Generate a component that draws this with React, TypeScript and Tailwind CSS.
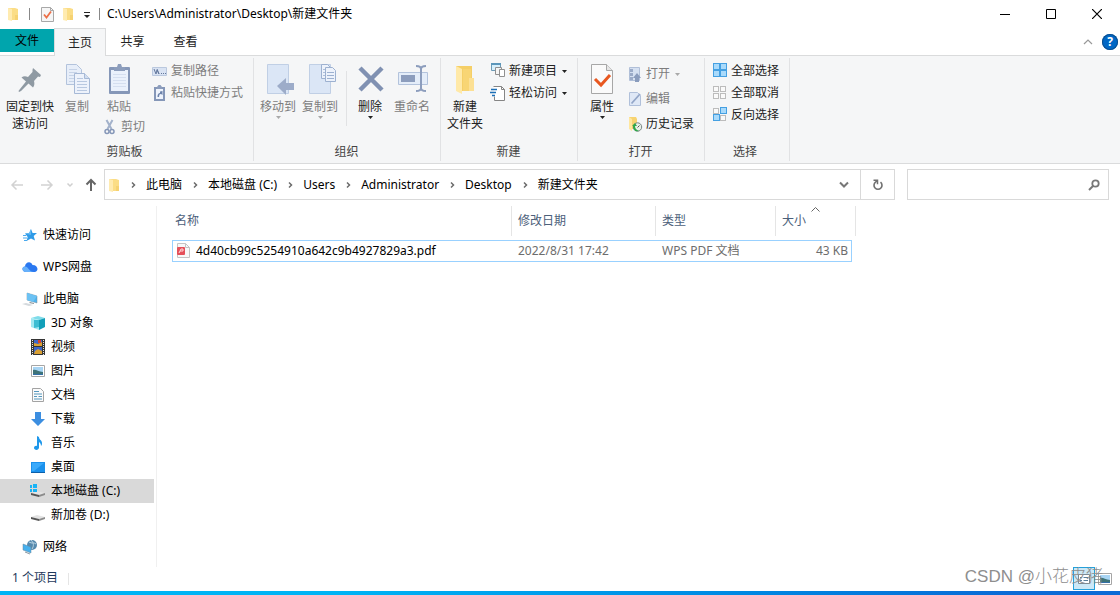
import React from 'react';

type IconProps = { className?: string };

const Svg: React.FC<{ w: number; h: number; className?: string; children: React.ReactNode }> = ({ w, h, className, children }) => (
  <svg width={w} height={h} viewBox={`0 0 ${w} ${h}`} fill="none" aria-hidden="true" className={`shrink-0 ${className ?? ''}`}>
    {children}
  </svg>
);

/* Small shared glyphs */

const FolderIcon: React.FC<IconProps> = ({ className }) => (
  <Svg w={12} h={14} className={className}>
    <path d="M1 1h7l3 1v11H1z" fill="#fbdd86" />
    <path d="M1 1l4 1v12l-4-1z" fill="#ffebb0" />
    <path d="M8 8h3v5H8z" fill="#f6d272" />
  </Svg>
);

const CheckPageIcon: React.FC = () => (
  <Svg w={13} h={15}>
    <path d="M.5.5h9l3 3v11H.5z" fill="#f6f6f6" stroke="#a8a8a8" />
    <path d="M9.500.500v3h3" stroke="#a8a8a8" />
    <path d="M3 7.500l2.500 3L10 4.500" stroke="#ec7048" strokeWidth="1.800" />
  </Svg>
);

const DropArrow: React.FC<{ muted?: boolean }> = ({ muted }) => (
  <Svg w={5} h={3}>
    <path d="M0 0h5L2.500 3z" fill={muted ? '#a9a9a9' : '#222'} />
  </Svg>
);

const Crumb: React.FC = () => (
  <Svg w={26} h={10}>
    <path d="M12 2.500L14.500 5 12 7.500" stroke="#6b6b6b" strokeWidth="1.500" />
  </Svg>
);

/* Ribbon icons, large */

const PinIcon = () => (
  <Svg w={32} h={32}>
    <path d="M19 4l8 7-1 2-2-.5-4 4.500c.8 3 .3 5-1 6.500l-4.500-4L7 27l-2 1-.500-1L6 25l6-7.500-4.500-4c1.800-1.500 4-1.700 6.500-.500l4.500-5V6z" fill="#8f9aa3" />
  </Svg>
);

const pageLines = (x: number, y: number, w: number, n: number, c: string) =>
  Array.from({ length: n }, (_, i) => <path key={i} d={`M${x} ${y + i * 3}.5h${w}`} stroke={c} />);

const CopyIcon = () => (
  <Svg w={32} h={32}>
    <path d="M5.500.500h10l5 5v15h-15z" fill="#e7eef9" stroke="#b3c3dc" />
    {pageLines(8, 5, 8, 5, '#c6d3e7')}
    <path d="M13.500 9.500h10l5 5v15h-15z" fill="#edf2fb" stroke="#a6b9d6" />
    <path d="M23.500 9.500v5h5" stroke="#a6b9d6" fill="#d2deef" />
    {pageLines(16, 14, 6, 1, '#b8c8e0')}
    {pageLines(16, 17, 10, 4, '#b8c8e0')}
  </Svg>
);

const PasteIcon = () => (
  <Svg w={32} h={32}>
    <rect x="6" y="3" width="21" height="27" rx="1" fill="#8597b8" />
    <rect x="8" y="6" width="17" height="21" fill="#eaf1fc" />
    {pageLines(10, 10, 13, 5, '#d5dff0')}
    <path d="M11 7V3h3l1-3h3l1 3h3v4z" fill="#8c9dbc" />
  </Svg>
);

const MoveToIcon = () => (
  <Svg w={32} h={32}>
    <path d="M5.500.500h21v29h-21z" fill="#dbe6f6" stroke="#c0cfe5" />
    <path d="M15 22l9-8v5h8v7h-8v5z" fill="#9dacc9" />
  </Svg>
);

const CopyToIcon = () => (
  <Svg w={32} h={32}>
    <path d="M5.500.500h21v29h-21z" fill="#dbe6f6" stroke="#c0cfe5" />
    <path d="M17.500.500h6l3 3v11h-9z" fill="#edf2fb" stroke="#9db1d0" />
    <path d="M21.500 3.500h7l3 3v11h-10z" fill="#edf2fb" stroke="#9db1d0" />
    {pageLines(23, 8, 7, 3, '#9db1d0')}
    {pageLines(19, 5, 2, 3, '#aebfda')}
  </Svg>
);

const DeleteIcon = () => (
  <Svg w={32} h={32}>
    <path d="M6 4l22 22M28 4L6 26" stroke="#8091b2" strokeWidth="4.500" />
  </Svg>
);

const RenameIcon = () => (
  <Svg w={32} h={32}>
    <path d="M2.500 8.500h29v12h-29z" fill="#e4edf9" stroke="#b3c3dc" />
    <path d="M5 11h14v7H5z" fill="#8c9dbd" />
    <path d="M20 2c3 0 5 1 5 3v19c0 2-2 3-5 3M30 2c-3 0-5 1-5 3v19c0 2 2 3 5 3" stroke="#8c9dbd" strokeWidth="2" />
  </Svg>
);

const NewFolderIcon = () => (
  <Svg w={32} h={32}>
    <path d="M7 2h16v12l2 1v12H9z" fill="#f5cf67" />
    <path d="M14 5h8v9h-2v13h-6z" fill="#f8d574" />
    <path d="M20 14h5v13h-5z" fill="#fce094" />
    <path d="M7 2l6 3v25l-6-3z" fill="#ffe9a8" />
  </Svg>
);

const PropertiesIcon = () => (
  <Svg w={32} h={32}>
    <path d="M5.500.500h15l6 6v23h-21z" fill="#fafafa" stroke="#a7a7a7" />
    <path d="M20.500.500v6h6" stroke="#a7a7a7" fill="#e6e6e6" />
    <path d="M9 15l6 6 9-10" stroke="#e8571f" strokeWidth="3" />
  </Svg>
);

/* Ribbon icons, small */

const CopyPathIcon = () => (
  <Svg w={16} h={16}>
    <path d="M.500 4.500h14v8h-14z" fill="#d9e3f3" stroke="#bac8de" />
    <path d="M2 6l2 5 1-4 2 4M5 6l2 5M9 10.500h1M11 10.500h1M13 10.500h1" stroke="#64789c" />
  </Svg>
);

const ShortcutIcon = () => (
  <Svg w={16} h={16}>
    <path d="M2 2h11v14H2z" fill="#8597b8" />
    <path d="M4 4h7v10H4z" fill="#eef3fc" />
    <path d="M5 4V2l1.500-2h2L10 2v2z" fill="#8c9dbc" />
    <path d="M5.500 12c0-3 1-4 2.500-4V6.500L10.500 6v4L9 9c-2 0-1.500 1-2 3z" fill="#6d83ab" />
  </Svg>
);

const CutIcon = () => (
  <Svg w={14} h={16}>
    <path d="M2.500 1l5 9M8.500 1l-5 9" stroke="#a3b2cb" strokeWidth="2" />
    <circle cx="3" cy="12.500" r="2" stroke="#8597b8" strokeWidth="1.500" />
    <circle cx="8" cy="12.500" r="2" stroke="#8597b8" strokeWidth="1.500" />
  </Svg>
);

const NewItemIcon = () => (
  <Svg w={16} h={16}>
    <path d="M1.500.500h9v7h-9z" fill="#d7effb" stroke="#6d9bb6" />
    <path d="M1 0h10v2H1z" fill="#5b96ba" />
    <path d="M5.500 4.500h6v7h-6z" fill="#f5f5f5" stroke="#909090" />
    <path d="M9.500 6.500h5v7h-5z" fill="#fff" stroke="#909090" />
  </Svg>
);

const EasyAccessIcon = () => (
  <Svg w={16} h={16}>
    <path d="M3.500 1.500h8l3 3v11h-10v-4" fill="#fff" stroke="#858585" />
    <path d="M11.500 1.500v3h3" stroke="#858585" />
    <path d="M1 4.500h6M0 7.500h6M2 10.500h3" stroke="#1d70b7" strokeWidth="1.500" />
  </Svg>
);

const OpenIcon = () => (
  <Svg w={16} h={16}>
    <path d="M2.500 1.500h10v13h-10z" fill="#d5e0f1" stroke="#b0bfd8" />
    <path d="M3 3h3v3H3zM3 7h3v3H3zM3 11h3v3H3z" fill="#9babc8" />
    <path d="M8 16v-4H6l4-5 4 5h-2v4z" fill="#8a9cbd" />
  </Svg>
);

const EditIcon = () => (
  <Svg w={16} h={16}>
    <path d="M2.500 1.500h8l3 3v10h-11z" fill="#dfe8f6" stroke="#b0c0da" />
    <path d="M4.500 12.500L13 3" stroke="#93a6c8" strokeWidth="1.800" />
  </Svg>
);

const HistoryIcon = () => (
  <Svg w={16} h={16}>
    <path d="M2 1h7l1 2v10H3z" fill="#f7d371" />
    <path d="M2 1l3 2v12l-3-2z" fill="#ffe79f" />
    <circle cx="10.500" cy="11" r="4.200" fill="#e8f0e8" stroke="#7a8583" />
    <path d="M5 10l3-3 2 3H8c0 3 2 4 4 5-4 1-6-1-6-5z" fill="#2fa84a" />
    <path d="M10.500 11.500l2-2" stroke="#555" />
  </Svg>
);

const SelectIcon: React.FC<{ on: boolean[] }> = ({ on }) => (
  <Svg w={16} h={16}>
    {on.map((filled, i) => {
      const x = (i % 2) * 7;
      const y = Math.floor(i / 2) * 7;
      return filled ? (
        <rect key={i} x={x + 1.5} y={y + 0.5} width="6" height="6" fill="#a9dafb" stroke="#45a0e2" />
      ) : (
        <rect key={i} x={x + 1.5} y={y + 1.5} width="5" height="5" fill="#fafafa" stroke="#bcbcbc" />
      );
    })}
  </Svg>
);

/* Navigation pane icons */

const StarIcon = () => (
  <Svg w={16} h={16}>
    <path d="M9 2l1.600 4H15l-3.300 3 1.300 4.500L9 11.500 4.500 14l1.200-4L3 6.500 7.200 6z" fill="#2f9be8" />
    <path d="M9 2v6L3 6.500 7.200 6z" fill="#61b8f3" />
    <path d="M1 8.500h3M1 11h4M2 13.500h3" stroke="#49a9ee" />
  </Svg>
);

const CloudIcon = () => (
  <Svg w={16} h={16}>
    <path d="M4 13C-.500 13-.500 7.500 3 7.500 3 3 9 1.500 10.500 6c6 0 6.500 7 2 7z" fill="#2a78f0" />
    <path d="M4 13C-.500 13-.500 7.500 3 7.500c3-.500 4 5.500 9 5.500z" fill="#67b1fb" />
  </Svg>
);

const PcIcon = () => (
  <Svg w={16} h={16}>
    <path d="M5 2l10 3v7L5 9z" fill="#4fb4ef" stroke="#7a8c99" strokeWidth=".5" />
    <path d="M5 2l10 3-4 6-6-2z" fill="#6cc2f4" />
    <path d="M8 11l4 1v1l-5-1z" fill="#8b959c" />
    <path d="M0 13l4-1 7 2-4 1z" fill="#d4d9dd" />
  </Svg>
);

const CubeIcon = () => (
  <Svg w={16} h={16}>
    <path d="M1 3l7-2 7 2-6 2z" fill="#7fdcea" />
    <path d="M1 3l8 2v10l-8-3z" fill="#9fe8f2" />
    <path d="M9 5l6-2v9l-6 3z" fill="#129fb9" />
    <path d="M4 5l5 0v7l-5 1z" fill="#3bbdd3" />
  </Svg>
);

const VideoIcon = () => (
  <Svg w={16} h={16}>
    <path d="M1 0h14v16H1z" fill="#353535" />
    <path d="M4 1h8v6H4zM4 8h8v7H4z" fill="#3b66c9" />
    <path d="M4 4l4 1 4-2v4H4zM5 12l3-2 4 2v3H4z" fill="#d9a032" />
    <path d="M8 1h3v3H8z" fill="#d4422d" />
    <path d="M2.500 1v15M13.500 1v15" stroke="#e6e6e6" strokeDasharray="1 1" />
  </Svg>
);

const PictureIcon: React.FC = () => (
  <Svg w={16} h={16}>
    <path d="M1.500 2.500h13v11h-13z" fill="#fff" stroke="#a6a6a6" />
    <path d="M3 4h10v8H3z" fill="#a8d5f4" />
    <path d="M3 7c3-1 5 2 10 2v3H3z" fill="#3e7378" />
    <path d="M3 11h10v1H3z" fill="#336fa8" />
  </Svg>
);

const DocIcon = () => (
  <Svg w={16} h={16}>
    <path d="M2.500 1.500h8l3 3v10h-11z" fill="#fbfbfb" stroke="#a3a3a3" />
    <path d="M4 4.500h5M4 7h8M4 9.500h3M8.500 9.500H12M4 12h8" stroke="#5597bd" />
  </Svg>
);

const DownloadIcon = () => (
  <Svg w={16} h={16}>
    <path d="M5 1h6v7h4l-7 7-7-7h4z" fill="#3c8ee0" />
  </Svg>
);

const MusicIcon = () => (
  <Svg w={16} h={16}>
    <path d="M7 1l2 1c0 3 3 3 3 6 0 1 0 2-1 3 0-3-2-4-2-4v6c-1 3-5 2-5 0s2-2.500 3-2z" fill="#1e97ea" />
  </Svg>
);

const DesktopIcon = () => (
  <Svg w={16} h={16}>
    <path d="M1 3h14v11H1z" fill="#1b91ec" />
    <path d="M2 4h12L4 12H2z" fill="#3aaafb" />
    <path d="M1 13h14v1H1z" fill="#0c5fa9" />
  </Svg>
);

const DriveIcon: React.FC<{ system?: boolean }> = ({ system }) => (
  <Svg w={16} h={16}>
    <path d="M1 10l6-2 8 2-6 2z" fill="#e3e3e3" />
    <path d="M1 10l8 2v2l-8-2z" fill="#555" />
    <path d="M9 12l6-2v2l-6 2z" fill="#8c8c8c" />
    {system && <path d="M0 2h2v3H0zM3 1h4v4H3zM0 6h2v3H0zM3 6h4v3H3z" fill="#18b3f5" />}
  </Svg>
);

const NetworkIcon = () => (
  <Svg w={16} h={16}>
    <circle cx="10" cy="6" r="5" fill="#5689ad" />
    <path d="M7 3c3 2 5 0 7 2M9 1c3 3 3 6 1 9" stroke="#b8d5e5" />
    <path d="M1 5l8 3v6l-8-3z" fill="#46b0ee" stroke="#6b8798" strokeWidth=".5" />
    <path d="M3 13l5 2" stroke="#8a99a3" />
  </Svg>
);

const PdfIcon = () => (
  <Svg w={14} h={16}>
    <path d="M1.500.500h8l4 4v10h-12z" fill="#f8f8f8" stroke="#c4c4c4" />
    <path d="M9.500.500v4h4" stroke="#c4c4c4" />
    <rect x="1" y="4" width="8" height="8" rx="1" fill="#e5505a" />
    <path d="M3 10l2-4h2v2H4" stroke="#ffd9d9" />
  </Svg>
);

/* Ribbon pieces */

interface BigButtonProps {
  icon: React.ReactNode;
  lines: string[];
  disabled?: boolean;
  arrow?: boolean;
  wide?: boolean;
}

const BigButton: React.FC<BigButtonProps> = ({ icon, lines, disabled, arrow, wide }) => (
  <button type="button" disabled={disabled} className={`flex flex-col items-center pt-2 ${wide ? 'w-[60px]' : 'w-[42px]'} ${disabled ? 'text-[#7d7d7d]' : 'text-[#222]'}`}>
    {icon}
    <span className="mt-[2px] leading-[17px] whitespace-nowrap">
      {lines.map((line) => (
        <span key={line} className="block">{line}</span>
      ))}
    </span>
    {arrow && <span className="mt-px block"><DropArrow muted={disabled} /></span>}
  </button>
);

interface SmallButtonProps {
  icon: React.ReactNode;
  label: string;
  disabled?: boolean;
  arrow?: boolean;
}

const SmallButton: React.FC<SmallButtonProps> = ({ icon, label, disabled, arrow }) => (
  <button type="button" disabled={disabled} className={`flex h-[22px] items-center gap-[3px] whitespace-nowrap ${disabled ? 'text-[#7d7d7d]' : 'text-[#222]'}`}>
    {icon}
    <span>{label}</span>
    {arrow && <span className="pl-[2px]"><DropArrow muted={disabled} /></span>}
  </button>
);

const Group: React.FC<{ label: string; className: string; children: React.ReactNode }> = ({ label, className, children }) => (
  <section aria-label={label} className={`my-[2px] flex shrink-0 flex-col border-r border-[#e1e2e4] ${className}`}>
    <div className="-mt-[2px] flex flex-1">{children}</div>
    <div className="h-[18px] pr-1 text-center leading-[18px] text-[#444]">{label}</div>
  </section>
);

const Ribbon = () => (
  <div className="flex h-[108px] border-b border-[#dadbdc] bg-[#f5f6f7]">
    <Group label="剪贴板" className="w-[254px]">
      <BigButton wide icon={<PinIcon />} lines={['固定到快', '速访问']} />
      <div className="-ml-1">
        <BigButton disabled icon={<CopyIcon />} lines={['复制']} />
      </div>
      <div>
        <BigButton disabled icon={<PasteIcon />} lines={['粘贴']} />
        <div className="mt-px pl-[6px]">
          <SmallButton disabled icon={<CutIcon />} label="剪切" />
        </div>
      </div>
      <div className="pt-1 pl-[7px]">
        <SmallButton disabled icon={<CopyPathIcon />} label="复制路径" />
        <SmallButton disabled icon={<ShortcutIcon />} label="粘贴快捷方式" />
      </div>
    </Group>
    <Group label="组织" className="w-[187px] pl-[3px]">
      <BigButton disabled arrow icon={<MoveToIcon />} lines={['移动到']} />
      <BigButton disabled arrow icon={<CopyToIcon />} lines={['复制到']} />
      <div className="mt-[15px] mr-[2px] ml-[5px] h-[55px] w-px bg-[#e1e2e4]" />
      <BigButton arrow icon={<DeleteIcon />} lines={['删除']} />
      <BigButton disabled icon={<RenameIcon />} lines={['重命名']} />
    </Group>
    <Group label="新建" className="w-[137px] pl-[3px]">
      <BigButton icon={<NewFolderIcon />} lines={['新建', '文件夹']} />
      <div className="pt-1 pl-1">
        <SmallButton arrow icon={<NewItemIcon />} label="新建项目" />
        <SmallButton arrow icon={<EasyAccessIcon />} label="轻松访问" />
      </div>
    </Group>
    <Group label="打开" className="w-[127px] pl-[3px]">
      <BigButton arrow icon={<PropertiesIcon />} lines={['属性']} />
      <div className="flex flex-col gap-[3px] pt-[7px] pl-1">
        <SmallButton disabled arrow icon={<OpenIcon />} label="打开" />
        <SmallButton disabled icon={<EditIcon />} label="编辑" />
        <SmallButton icon={<HistoryIcon />} label="历史记录" />
      </div>
    </Group>
    <Group label="选择" className="w-[85px]">
      <div className="pt-1 pl-[7px]">
        <SmallButton icon={<SelectIcon on={[true, true, true, true]} />} label="全部选择" />
        <SmallButton icon={<SelectIcon on={[false, false, false, false]} />} label="全部取消" />
        <SmallButton icon={<SelectIcon on={[false, true, true, false]} />} label="反向选择" />
      </div>
    </Group>
  </div>
);

/* Window chrome */

const TitleBar = () => (
  <header className="flex h-[28px] items-center pl-[7px]">
    <FolderIcon />
    <div className="ml-[10px] h-3 w-px bg-[#888]" />
    <div className="ml-[11px]"><CheckPageIcon /></div>
    <FolderIcon className="ml-2" />
    <button type="button" aria-label="自定义快速访问工具栏" className="ml-[9px] pt-[2px]">
      <Svg w={8} h={7}>
        <path d="M1 .500h6" stroke="#222" />
        <path d="M1 3h6L4 6z" fill="#222" />
      </Svg>
    </button>
    <div className="ml-2 h-3 w-px bg-[#888]" />
    <h1 className="ml-[7px] flex-1 whitespace-nowrap text-black">C:\Users\Administrator\Desktop\新建文件夹</h1>
    <button type="button" aria-label="最小化" className="flex h-full w-[45px] items-center justify-center">
      <Svg w={11} h={11}><path d="M0 5.500h10" stroke="#000" /></Svg>
    </button>
    <button type="button" aria-label="最大化" className="flex h-full w-[46px] items-center justify-center">
      <Svg w={10} h={10}><path d="M.500.500h9v9h-9z" stroke="#000" /></Svg>
    </button>
    <button type="button" aria-label="关闭" className="flex h-full w-[46px] items-center justify-center">
      <Svg w={10} h={10}><path d="M0 0l10 10M10 0L0 10" stroke="#000" strokeWidth="1.200" /></Svg>
    </button>
  </header>
);

const TabBar = () => (
  <nav className="flex h-[28px] items-stretch border-b border-[#dadbdc]">
    <button type="button" className="mt-px mb-[3px] w-[54px] bg-[#00a5ad] pt-px text-black">文件</button>
    <button type="button" className="-mb-px w-[52px] border border-b-0 border-[#dadbdc] bg-[#f5f6f7] text-[#222]">主页</button>
    <button type="button" className="w-[53px] text-[#222]">共享</button>
    <button type="button" className="w-[53px] text-[#222]">查看</button>
    <div className="flex flex-1 items-center justify-end gap-[9px] pr-[2px]">
      <button type="button" aria-label="最小化功能区">
        <Svg w={10} h={6}><path d="M1 5l4-4 4 4" stroke="#999" strokeWidth="1.200" /></Svg>
      </button>
      <button type="button" aria-label="帮助" className="flex size-4 items-center justify-center rounded-full bg-[#0067c5] font-bold text-white ring-1 ring-[#0b4f8e] ring-inset">?</button>
    </div>
  </nav>
);

const crumbs = ['此电脑', '本地磁盘 (C:)', 'Users', 'Administrator', 'Desktop', '新建文件夹'];

const AddressBar = () => (
  <div className="flex h-[42px] items-start pt-[5px] pr-[11px]">
    <div className="flex h-[31px] w-[104px] shrink-0 items-center pl-[10px]">
      <button type="button" disabled aria-label="后退">
        <Svg w={14} h={12}><path d="M13 6H2M6.500 1.500L2 6l4.500 4.500" stroke="#d2d2d2" strokeWidth="1.500" /></Svg>
      </button>
      <button type="button" disabled aria-label="前进" className="ml-4">
        <Svg w={14} h={12}><path d="M1 6h11M7.500 1.500L12 6l-4.500 4.500" stroke="#d2d2d2" strokeWidth="1.500" /></Svg>
      </button>
      <button type="button" disabled aria-label="最近的位置" className="ml-3">
        <Svg w={8} h={6}><path d="M1.500 1.500L4 4l2.500-2.500" stroke="#cfcfcf" strokeWidth="1.500" /></Svg>
      </button>
      <button type="button" aria-label="上移" className="ml-[11px]">
        <Svg w={12} h={14}><path d="M6 13V2M1.500 6.500L6 2l4.500 4.500" stroke="#666" strokeWidth="2" /></Svg>
      </button>
    </div>
    <div className="flex h-[31px] flex-1 items-center border border-[#d9d9d9]">
      <FolderIcon className="ml-[3px]" />
      <ol className="flex flex-1 items-center whitespace-nowrap">
        {crumbs.map((name) => (
          <li key={name} className="flex items-center">
            <Crumb />
            <a href="#" className="text-black">{name}</a>
          </li>
        ))}
      </ol>
      <button type="button" aria-label="以前的位置" className="flex h-full w-[32px] items-center justify-center">
        <Svg w={10} h={7}><path d="M1 1.500l4 4 4-4" stroke="#777" strokeWidth="2" /></Svg>
      </button>
      <button type="button" aria-label="刷新" className="flex h-full w-[34px] items-center justify-center border-l border-[#d9d9d9]">
        <Svg w={12} h={12}>
          <path d="M8.500 3.200A4 4 0 1 1 3.500 3.200L5 2" stroke="#707070" strokeWidth="1.600" />
          <path d="M1.500 1.200h4v4" stroke="#707070" strokeWidth="1.500" />
        </Svg>
      </button>
    </div>
    <label className="ml-3 flex h-[31px] w-[202px] items-center border border-[#d9d9d9] pr-2">
      <input type="search" aria-label="搜索" className="min-w-0 flex-1 outline-none" />
      <Svg w={12} h={12}>
        <circle cx="7.500" cy="4.500" r="3.200" stroke="#777" strokeWidth="1.800" />
        <path d="M5 7L1 11" stroke="#777" strokeWidth="2" />
      </Svg>
    </label>
  </div>
);

/* Navigation pane */

interface NavEntry {
  label: string;
  icon: React.ReactNode;
  selected?: boolean;
}

const pcEntries: NavEntry[] = [
  { label: '3D 对象', icon: <CubeIcon /> },
  { label: '视频', icon: <VideoIcon /> },
  { label: '图片', icon: <PictureIcon /> },
  { label: '文档', icon: <DocIcon /> },
  { label: '下载', icon: <DownloadIcon /> },
  { label: '音乐', icon: <MusicIcon /> },
  { label: '桌面', icon: <DesktopIcon /> },
  { label: '本地磁盘 (C:)', icon: <DriveIcon system />, selected: true },
  { label: '新加卷 (D:)', icon: <DriveIcon /> },
];

const NavItem: React.FC<{ entry: NavEntry; nested?: boolean }> = ({ entry, nested }) => (
  <a
    href="#"
    className={`flex h-6 items-center gap-[5px] whitespace-nowrap text-black ${nested ? 'pl-[30px]' : 'pl-[22px]'} ${entry.selected ? 'bg-[#d9d9d9]' : ''}`}
  >
    {entry.icon}
    {entry.label}
  </a>
);

const NavPane = () => (
  <nav className="flex w-[157px] shrink-0 flex-col gap-2 border-r border-[#f0f0f0] pt-[17px] pr-[2px]">
    <NavItem entry={{ label: '快速访问', icon: <StarIcon /> }} />
    <NavItem entry={{ label: 'WPS网盘', icon: <CloudIcon /> }} />
    <div>
      <NavItem entry={{ label: '此电脑', icon: <PcIcon /> }} />
      {pcEntries.map((entry) => (
        <NavItem key={entry.label} entry={entry} nested />
      ))}
    </div>
    <NavItem entry={{ label: '网络', icon: <NetworkIcon /> }} />
  </nav>
);

/* File list */

const headCell = 'flex h-[30px] items-center border-r border-[#e5e5e5]';
const bodyCell = 'h-[22px] border-y border-[#99d1ff] p-0';

const FileList = () => (
  <main className="flex-1 pl-[15px]">
    <table className="w-[684px] table-fixed border-separate border-spacing-0 text-left whitespace-nowrap">
      <colgroup>
        <col className="w-[340px]" />
        <col className="w-[144px]" />
        <col className="w-[120px]" />
        <col className="w-[76px]" />
        <col className="w-[4px]" />
      </colgroup>
      <thead className="text-[#4c607a]">
        <tr>
          <th className="p-0 pb-1 font-normal"><div className={`${headCell} pl-[3px]`}>名称</div></th>
          <th className="p-0 pb-1 font-normal"><div className={`${headCell} pl-[6px]`}>修改日期</div></th>
          <th className="p-0 pb-1 font-normal"><div className={`${headCell} pl-[6px]`}>类型</div></th>
          <th colSpan={2} aria-sort="ascending" className="p-0 pb-1 font-normal">
            <div className={`${headCell} relative pl-[6px]`}>
              大小
              <span className="absolute inset-x-0 top-px flex justify-center">
                <Svg w={9} h={5}><path d="M.500 4.500l4-4 4 4" stroke="#666" /></Svg>
              </span>
            </div>
          </th>
        </tr>
      </thead>
      <tbody className="text-[#6d6d6d]">
        <tr>
          <td className={`${bodyCell} border-l`}>
            <div className="flex items-center gap-[6px] pl-[3px] text-black">
              <PdfIcon />
              4d40cb99c5254910a642c9b4927829a3.pdf
            </div>
          </td>
          <td className={`${bodyCell} pl-[6px]`}>2022/8/31 17:42</td>
          <td className={`${bodyCell} pl-[6px]`}>WPS PDF 文档</td>
          <td className={`${bodyCell} border-r pr-[3px] text-right`}>43 KB</td>
        </tr>
      </tbody>
    </table>
  </main>
);

const StatusBar = () => (
  <footer className="relative flex h-[24px] items-start pr-[7px] pl-3">
    <span className="pt-[2px] text-[#1e395b]">1 个项目</span>
    <div className="mt-[6px] ml-[10px] h-3 w-px bg-[#e5e5e5]" />
    <div className="ml-auto flex items-center gap-[2px]">
      <button type="button" aria-label="详细信息" className="flex h-[23px] w-[22px] items-center justify-center border border-[#26a0da] bg-[#cce8f6]">
        <Svg w={12} h={10}>
          <path d="M.500.500h11v9H.500z" fill="#fff" stroke="#7b8a94" />
          <path d="M2 3.500h2M5.500 3.500H10M2 6.500h2M5.500 6.500H10" stroke="#5b7f9a" />
        </Svg>
      </button>
      <button type="button" aria-label="大缩略图"><PictureIcon /></button>
    </div>
    <span className="absolute right-[17px] bottom-[2px] font-['Liberation_Sans','Noto_Sans_CJK_SC',sans-serif] text-[17px] leading-6 font-light whitespace-nowrap text-[#8e8e8e]">CSDN @小花皮猪</span>
  </footer>
);

export default function App() {
  return (
    <div className="flex min-h-screen flex-col overflow-hidden bg-white font-['Noto_Sans','Noto_Sans_CJK_SC',sans-serif] text-[12px] leading-[18px]">
      <TitleBar />
      <TabBar />
      <Ribbon />
      <AddressBar />
      <div className="flex flex-1">
        <NavPane />
        <FileList />
      </div>
      <StatusBar />
      <div className="h-1 bg-linear-to-r from-[#00b4f5] from-30% to-[#0a6bd6] to-90%" />
    </div>
  );
}
